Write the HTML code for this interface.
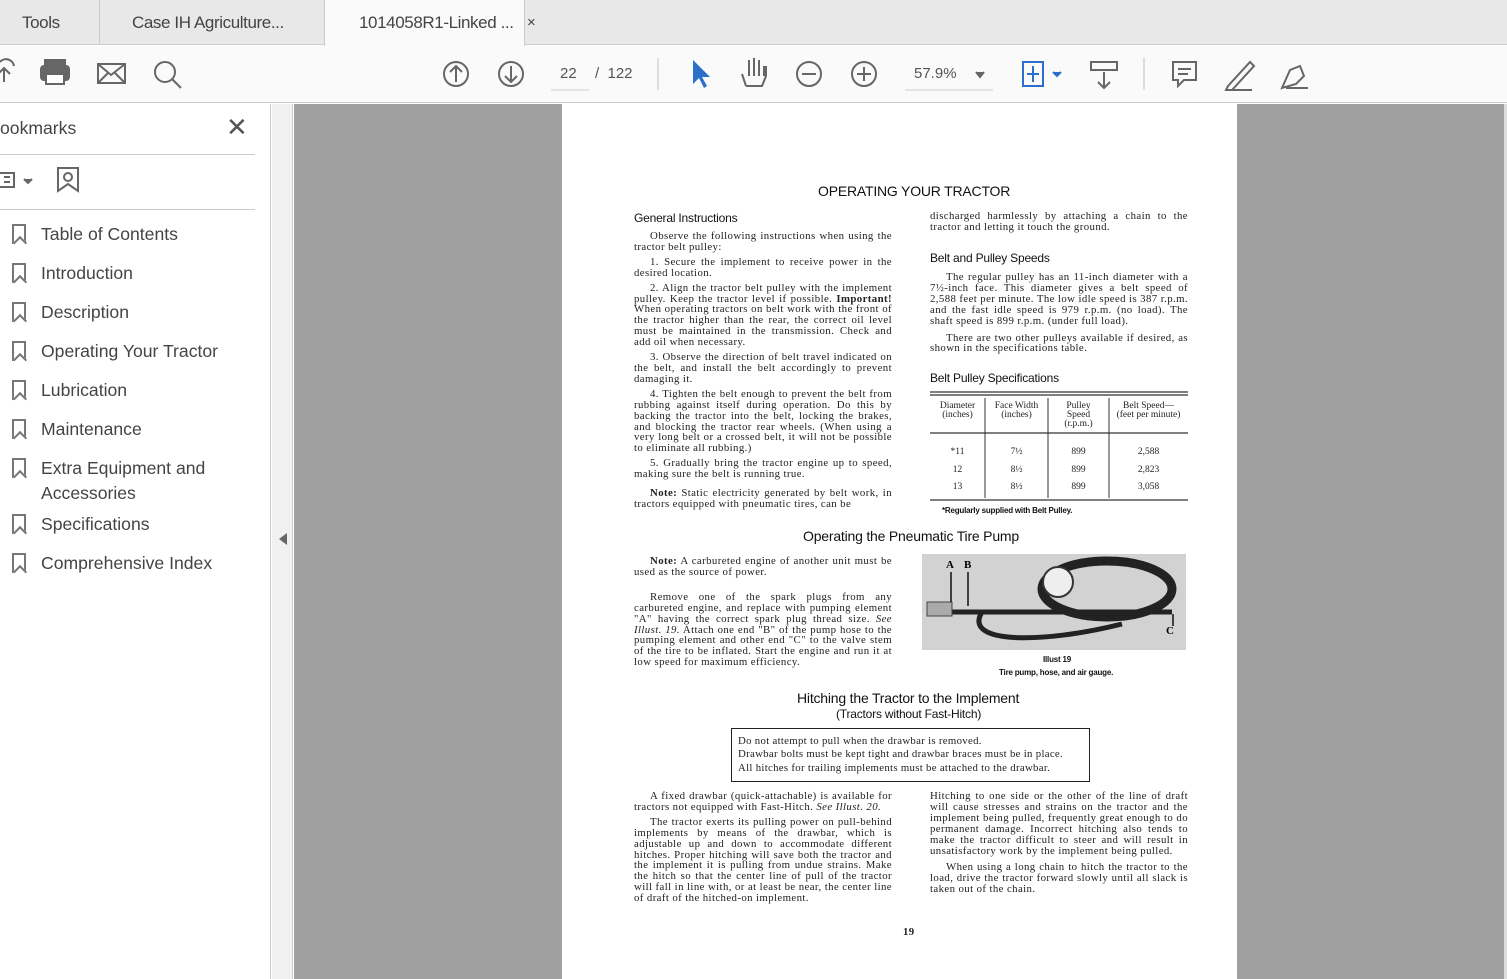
<!DOCTYPE html>
<html><head><meta charset="utf-8"><style>
*{margin:0;padding:0;box-sizing:border-box}
body{width:1507px;height:979px;overflow:hidden;position:relative;background:#fff;font-family:"Liberation Sans",sans-serif}
.a{position:absolute}
.tab{position:absolute;top:0;height:45px;font-size:17px;letter-spacing:-0.4px;color:#444;line-height:46px;white-space:nowrap}
.bm{position:absolute;left:12px;font-size:17.6px;color:#444}
.bm i{position:absolute;left:0;top:2px;width:14px;height:20px;border:2px solid #777;border-bottom:none}
.bm i:after{content:"";position:absolute;left:1px;top:12px;width:8px;height:8px;border-left:2px solid #777;border-top:2px solid #777;transform:rotate(45deg);background:#fff}
.bm span{position:absolute;left:29px;white-space:nowrap;line-height:25px}
.p{position:absolute;font-family:"Liberation Serif",serif;font-size:10.8px;letter-spacing:0.4px;line-height:10.9px;color:#222;text-align:justify}
.p p{text-indent:16px;margin-bottom:4px}
.h{position:absolute;font-family:"Liberation Sans",sans-serif;color:#111;font-weight:normal;letter-spacing:-0.2px}
</style></head><body>
<div class="a" style="left:0;top:0;width:1507px;height:45px;background:#e8e8e8;border-bottom:1px solid #ccc"></div>
<div class="tab" style="left:22px">Tools</div>
<div class="a" style="left:99px;top:0;width:1px;height:45px;background:#ccc"></div>
<div class="tab" style="left:132px">Case IH Agriculture...</div>
<div class="a" style="left:324px;top:0;width:201px;height:46px;background:#fafafa;border-left:1px solid #ccc;border-right:1px solid #ccc"></div>
<div class="tab" style="left:359px">1014058R1-Linked ...</div>
<div class="tab" style="left:527px;font-size:15px">×</div>
<div class="a" style="left:0;top:46px;width:1507px;height:57px;background:#fafafa;border-bottom:1px solid #ccc"></div>
<svg class="a" style="left:0;top:46px" width="1507" height="57" fill="none" stroke="#666" stroke-width="2">
<path d="M4 36 V22 M-2 28 L4 22 L10 28 M0 16 A8 8 0 0 1 14 20"/>
<rect x="45" y="14" width="20" height="6" fill="#666"/><rect x="41" y="20" width="28" height="14" rx="3" fill="#666"/><rect x="46" y="28" width="18" height="10" fill="#fff"/>
<rect x="98" y="18" width="27" height="19"/><path d="M98 18 L111 29 L125 18 M98 37 L108 27 M125 37 L115 27"/>
<circle cx="165" cy="26" r="10"/><path d="M172 33 L181 42"/>
<circle cx="456" cy="28" r="12"/><path d="M456 36 V20 M450 26 L456 20 L462 26"/>
<circle cx="511" cy="28" r="12"/><path d="M511 20 V36 M505 30 L511 36 L517 30"/>
<path d="M658 12 V44 M1144 12 V44" stroke="#ddd"/>
<path d="M693 14 L693 38 L699 32 L704 42 L707 40 L702 31 L710 31 Z" fill="#2a6fc9" stroke="none"/>
<path d="M746 40 L742 28 M746 40 H762 L766 30 V20 M749 30 V14 M754 30 V12 M759 30 V14 M764 30 V20"/>
<circle cx="809" cy="28" r="12"/><path d="M802 28 H816"/>
<circle cx="864" cy="28" r="12"/><path d="M857 28 H871 M864 21 V35"/>
<path d="M976 26 L980 31 L984 26" fill="#666"/>
<path d="M905 44 H993 M551 44 H589" stroke="#ccc" stroke-width="1"/>
<rect x="1023" y="16" width="20" height="24" stroke="#2a6fc9"/><path d="M1033 20 V36 M1027 28 H1039" stroke="#2a6fc9"/><path d="M1053 26 L1057 30 L1061 26" fill="#2a6fc9" stroke="#2a6fc9"/>
<path d="M1091 16 H1117 V24 H1091 Z M1104 26 V42 M1098 36 L1104 42 L1110 36"/>
<path d="M1173 16 H1196 V34 H1184 L1178 40 V34 H1173 Z M1178 23 H1191 M1178 28 H1188"/>
<path d="M1228 40 L1250 16 L1254 20 L1232 44 L1226 44 Z M1226 44 H1252"/>
<path d="M1282 42 L1290 24 L1300 20 L1304 30 L1296 38 Z M1286 42 H1308"/>
</svg>
<div class="a" style="left:560px;top:65px;font-size:15px;color:#555">22</div>
<div class="a" style="left:595px;top:65px;font-size:15px;color:#555">/&nbsp;&nbsp;122</div>
<div class="a" style="left:914px;top:65px;font-size:15px;color:#555">57.9%</div>
<div class="a" style="left:0;top:104px;width:271px;height:875px;background:#fff;border-right:1px solid #ccc"></div>
<div class="a" style="left:0;top:118px;font-size:17.6px;color:#444">ookmarks</div>
<div class="a" style="left:226px;top:112px;font-size:26px;color:#555">✕</div>
<div class="a" style="left:0;top:154px;width:255px;height:1px;background:#ccc"></div>
<div class="a" style="left:0;top:209px;width:255px;height:1px;background:#ccc"></div>
<svg class="a" style="left:0;top:165px" width="90" height="32" fill="none" stroke="#666" stroke-width="2"><path d="M0 8 H14 V22 H0 M4 12 H10 M4 17 H10"/><path d="M24 14 L28 18 L32 14" fill="#666"/><path d="M58 3 H78 V26 L68 19 L58 26 Z"/><circle cx="68" cy="12" r="4"/></svg>
<div class="bm" style="top:222px"><i></i><span>Table of Contents</span></div>
<div class="bm" style="top:261px"><i></i><span>Introduction</span></div>
<div class="bm" style="top:300px"><i></i><span>Description</span></div>
<div class="bm" style="top:339px"><i></i><span>Operating Your Tractor</span></div>
<div class="bm" style="top:378px"><i></i><span>Lubrication</span></div>
<div class="bm" style="top:417px"><i></i><span>Maintenance</span></div>
<div class="bm" style="top:456px"><i></i><span>Extra Equipment and<br>Accessories</span></div>
<div class="bm" style="top:512px"><i></i><span>Specifications</span></div>
<div class="bm" style="top:551px"><i></i><span>Comprehensive Index</span></div>
<div class="a" style="left:272px;top:104px;width:21px;height:875px;background:#f0f0f0;border-right:1px solid #ccc"></div>
<div class="a" style="left:279px;top:533px;width:0;height:0;border-top:6px solid transparent;border-bottom:6px solid transparent;border-right:8px solid #666"></div>
<div class="a" style="left:294px;top:104px;width:1213px;height:875px;background:#a0a0a0"></div>
<div class="a" style="left:562px;top:104px;width:675px;height:875px;background:#fff"></div>
<div class="a" style="left:1504px;top:104px;width:3px;height:875px;background:#ddd"></div>

<div class="h" style="left:818px;top:183px;font-size:14px">OPERATING YOUR TRACTOR</div>
<div class="h" style="left:634px;top:211px;font-size:12px">General Instructions</div>
<div class="p" style="left:634px;top:231px;width:258px">
<p>Observe the following instructions when using the tractor belt pulley:</p>
<p>1. Secure the implement to receive power in the desired location.</p>
<p>2. Align the tractor belt pulley with the implement pulley. Keep the tractor level if possible. <b>Important!</b> When operating tractors on belt work with the front of the tractor higher than the rear, the correct oil level must be maintained in the transmission. Check and add oil when necessary.</p>
<p>3. Observe the direction of belt travel indicated on the belt, and install the belt accordingly to prevent damaging it.</p>
<p>4. Tighten the belt enough to prevent the belt from rubbing against itself during operation. Do this by backing the tractor into the belt, locking the brakes, and blocking the tractor rear wheels. (When using a very long belt or a crossed belt, it will not be possible to eliminate all rubbing.)</p>
<p>5. Gradually bring the tractor engine up to speed, making sure the belt is running true.</p>
<p style="margin-top:8px"><b>Note:</b> Static electricity generated by belt work, in tractors equipped with pneumatic tires, can be</p>
</div>
<div class="p" style="left:930px;top:211px;width:258px"><p style="text-indent:0">discharged harmlessly by attaching a chain to the tractor and letting it touch the ground.</p></div>
<div class="h" style="left:930px;top:251px;font-size:12px">Belt and Pulley Speeds</div>
<div class="p" style="left:930px;top:272px;width:258px">
<p>The regular pulley has an 11-inch diameter with a 7½-inch face. This diameter gives a belt speed of 2,588 feet per minute. The low idle speed is 387 r.p.m. and the fast idle speed is 979 r.p.m. (no load). The shaft speed is 899 r.p.m. (under full load).</p>
<p style="margin-top:6px">There are two other pulleys available if desired, as shown in the specifications table.</p>
</div>
<div class="h" style="left:930px;top:371px;font-size:12px">Belt Pulley Specifications</div>
<svg class="a" style="left:930px;top:390px" width="260" height="112" fill="none" stroke="#333">
<path d="M0 2 H258 M0 5 H258 M0 43 H258 M0 110 H258" stroke-width="1.2"/>
<path d="M55 8 V108 M118 8 V108 M179 8 V108"/>
</svg>
<div class="p" style="left:930px;top:402px;width:258px;font-size:9.5px;letter-spacing:0;line-height:9px;text-align:center">
<div class="a" style="left:0;width:55px">Diameter<br>(inches)</div>
<div class="a" style="left:55px;width:63px">Face Width<br>(inches)</div>
<div class="a" style="left:118px;width:61px">Pulley<br>Speed<br>(r.p.m.)</div>
<div class="a" style="left:179px;width:79px">Belt Speed—<br>(feet per minute)</div>
<div class="a" style="left:0;top:42px;width:55px;line-height:17.5px">*11<br>12<br>13</div>
<div class="a" style="left:55px;top:42px;width:63px;line-height:17.5px">7½<br>8½<br>8½</div>
<div class="a" style="left:118px;top:42px;width:61px;line-height:17.5px">899<br>899<br>899</div>
<div class="a" style="left:179px;top:42px;width:79px;line-height:17.5px">2,588<br>2,823<br>3,058</div>
</div>
<div class="h" style="left:942px;top:506px;font-size:8px;font-weight:bold">*Regularly supplied with Belt Pulley.</div>
<div class="h" style="left:803px;top:528px;font-size:14px">Operating the Pneumatic Tire Pump</div>
<div class="p" style="left:634px;top:556px;width:258px">
<p><b>Note:</b> A carbureted engine of another unit must be used as the source of power.</p>
<p style="margin-top:14px">Remove one of the spark plugs from any carbureted engine, and replace with pumping element "A" having the correct spark plug thread size. <i>See Illust. 19.</i> Attach one end "B" of the pump hose to the pumping element and other end "C" to the valve stem of the tire to be inflated. Start the engine and run it at low speed for maximum efficiency.</p>
</div>
<svg class="a" style="left:922px;top:554px" width="264" height="96">
<rect width="264" height="96" fill="#d2d2d2"/>
<ellipse cx="185" cy="35" rx="65" ry="28" fill="none" stroke="#222" stroke-width="9"/>
<path d="M25 58 H250 M60 58 C40 90 120 90 200 70" fill="none" stroke="#222" stroke-width="5"/>
<circle cx="136" cy="28" r="15" fill="#eee" stroke="#333" stroke-width="2"/>
<rect x="5" y="48" width="25" height="14" fill="#aaa" stroke="#444"/>
<text x="24" y="14" font-size="11" font-family="Liberation Serif" font-weight="bold">A</text><text x="42" y="14" font-size="11" font-family="Liberation Serif" font-weight="bold">B</text><text x="244" y="80" font-size="11" font-family="Liberation Serif" font-weight="bold">C</text>
<path d="M29 18 V48 M46 18 V52 M251 60 V72" stroke="#111" stroke-width="1.5"/>
</svg>
<div class="h" style="left:1043px;top:655px;font-size:8px;font-weight:bold">Illust 19</div>
<div class="h" style="left:999px;top:668px;font-size:8px;font-weight:bold">Tire pump, hose, and air gauge.</div>
<div class="h" style="left:797px;top:690px;font-size:14px">Hitching the Tractor to the Implement</div>
<div class="h" style="left:836px;top:707px;font-size:12px">(Tractors without Fast-Hitch)</div>
<div class="a" style="left:731px;top:728px;width:359px;height:54px;border:1.5px solid #222"></div>
<div class="p" style="left:738px;top:735px;width:348px;line-height:13.3px;text-align:left;letter-spacing:0.3px">Do not attempt to pull when the drawbar is removed.<br>Drawbar bolts must be kept tight and drawbar braces must be in place.<br>All hitches for trailing implements must be attached to the drawbar.</div>
<div class="p" style="left:634px;top:791px;width:258px">
<p>A fixed drawbar (quick-attachable) is available for tractors not equipped with Fast-Hitch. <i>See Illust. 20.</i></p>
<p>The tractor exerts its pulling power on pull-behind implements by means of the drawbar, which is adjustable up and down to accommodate different hitches. Proper hitching will save both the tractor and the implement it is pulling from undue strains. Make the hitch so that the center line of pull of the tractor will fall in line with, or at least be near, the center line of draft of the hitched-on implement.</p>
</div>
<div class="p" style="left:930px;top:791px;width:258px">
<p style="text-indent:0">Hitching to one side or the other of the line of draft will cause stresses and strains on the tractor and the implement being pulled, frequently great enough to do permanent damage. Incorrect hitching also tends to make the tractor difficult to steer and will result in unsatisfactory work by the implement being pulled.</p>
<p style="margin-top:6px">When using a long chain to hitch the tractor to the load, drive the tractor forward slowly until all slack is taken out of the chain.</p>
</div>
<div class="p" style="left:903px;top:927px;font-weight:bold">19</div>
</body></html>
